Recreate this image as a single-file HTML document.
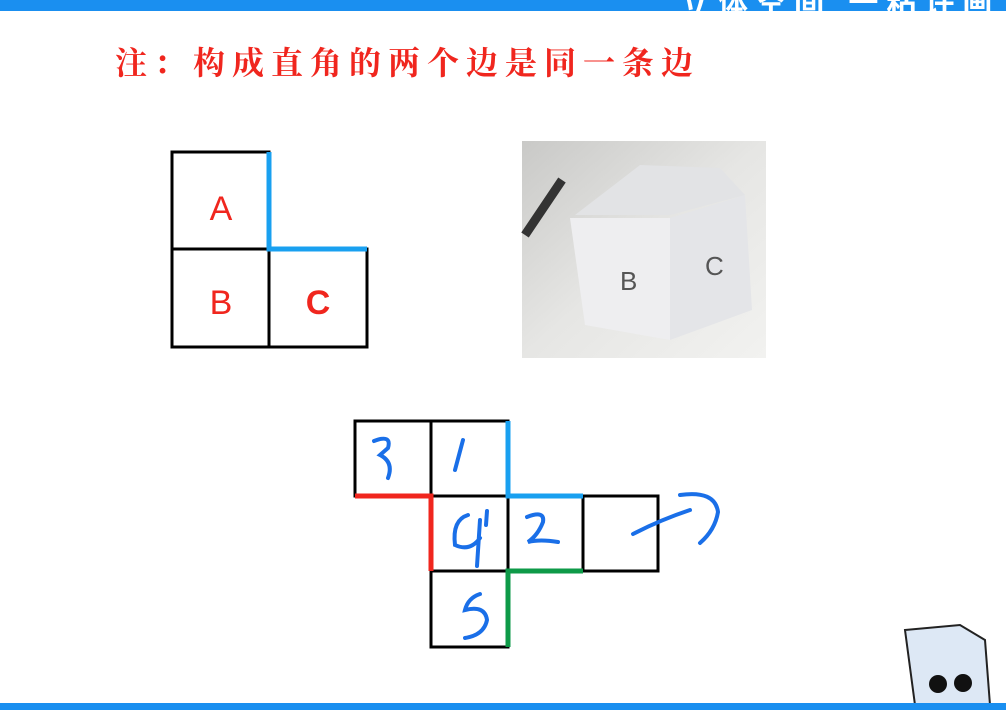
<!DOCTYPE html>
<html><head><meta charset="utf-8"><style>
body{margin:0;width:1006px;height:710px;background:#fff;position:relative;overflow:hidden;font-family:"Liberation Sans","Noto Sans CJK SC",sans-serif}
.top{position:absolute;left:0;top:0;width:1006px;height:11px;background:#1a8ff0;overflow:hidden}
.top span{position:absolute;left:680px;top:-22px;color:#fff;font-size:30px;font-weight:bold;letter-spacing:8px}
.bot{position:absolute;left:0;top:703px;width:1006px;height:7px;background:#1a8ff0}
.note{position:absolute;left:115px;top:38px;color:#f0261e;font-size:32px;font-family:"Noto Serif CJK SC","Noto Sans CJK SC",serif;font-weight:bold;letter-spacing:7px}
</style></head><body>
<div class="top"><span>立体空间 一粘许画</span></div>
<div class="note">注：构成直角的两个边是同一条边</div>
<svg width="1006" height="710" style="position:absolute;left:0;top:0">
<g fill="none" stroke="#000" stroke-width="3">
<rect x="172" y="152" width="97" height="97"/><rect x="172" y="249" width="97" height="98"/><rect x="269" y="249" width="98" height="98"/>
<rect x="355" y="421" width="76" height="75"/><rect x="431" y="421" width="77" height="75"/>
<rect x="431" y="496" width="77" height="75"/><rect x="508" y="496" width="75" height="75"/><rect x="583" y="496" width="75" height="75"/>
<rect x="431" y="571" width="77" height="76"/>
</g>
<path d="M269 152V249H367" stroke="#19a0f0" stroke-width="5" fill="none"/>
<path d="M355 496H431V571" stroke="#f0261e" stroke-width="5" fill="none"/>
<path d="M508 421V496H583" stroke="#19a0f0" stroke-width="5" fill="none"/>
<path d="M508 647V571H583" stroke="#0e9a48" stroke-width="5" fill="none"/>
<g font-size="34" fill="#f0261e" text-anchor="middle"><text x="221" y="220">A</text><text x="221" y="314">B</text><text x="318" y="314" font-weight="bold">C</text></g>
<g fill="none" stroke="#1a6fe8" stroke-width="4" stroke-linecap="round">
<path d="M374 441Q392 434 388 448L380 455Q394 462 388 478"/>
<path d="M463 440L455 470"/>
<path d="M468 515Q452 520 455 545Q470 552 480 538M480 520L477 566M487 511L486 525"/>
<path d="M527 517Q545 510 543 522Q538 535 528 542Q540 539 558 542"/>
<path d="M480 594Q468 598 465 610Q485 605 487 620Q484 635 465 638"/>
<path d="M633 534Q660 520 690 510M680 495Q715 490 718 512Q715 530 700 543"/>
</g>
<defs><linearGradient id="g" x1="0" y1="0" x2="1" y2="1"><stop offset="0" stop-color="#c9c9c7"/><stop offset="0.5" stop-color="#e6e6e4"/><stop offset="1" stop-color="#f2f2f0"/></linearGradient></defs>
<rect x="522" y="141" width="244" height="217" fill="url(#g)"/>
<polygon points="575,215 640,165 720,168 745,195 670,215" fill="#e2e3e5"/>
<polygon points="570,218 670,218 670,340 585,325" fill="#eeeef0"/>
<polygon points="670,218 745,195 752,310 670,340" fill="#e4e5e8"/>
<path d="M525 235L562 180" stroke="#333" stroke-width="9"/>
<text x="620" y="290" font-size="26" fill="#555">B</text><text x="705" y="275" font-size="26" fill="#555">C</text>
<polygon points="905,630 960,625 985,640 990,705 915,705" fill="#dde8f5" stroke="#222" stroke-width="2"/>
<circle cx="938" cy="684" r="9" fill="#111"/><circle cx="963" cy="683" r="9" fill="#111"/>
</svg>
<div class="bot"></div>
</body></html>
